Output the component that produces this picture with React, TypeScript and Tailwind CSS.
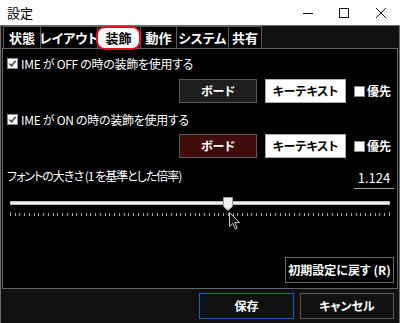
import React from "react";

const TICKS = Array.from({ length: 81 }, (_, i) => i);

function Check({ checked }: { checked?: boolean }) {
  return (
    <span className="flex h-[11px] w-[11px] shrink-0 items-center justify-center border border-[#8a8a8a] bg-white">
      {checked && (
        <svg width="9" height="9" viewBox="0 0 9 9">
          <path d="M1.5 4.6 L3.6 6.8 L7.6 1.8" fill="none" stroke="#444" strokeWidth="1.6" />
        </svg>
      )}
    </span>
  );
}

function ButtonRow({ board }: { board: string }) {
  return (
    <div className="flex h-[24px] items-center pl-[176px]">
      <button
        className={`flex h-[24px] w-[78px] items-center justify-center border border-[#5a5a5a] text-[12px] font-bold text-white ${board}`}
      >
        ボード
      </button>
      <button className="ml-[8px] flex h-[24px] w-[81px] items-center justify-center border border-[#adadad] bg-white text-[12px] font-bold text-black">
        キーテキスト
      </button>
      <span className="ml-[8px] flex items-center gap-[2px]">
        <Check />
        <span className="text-[12px] font-bold text-white">優先</span>
      </span>
    </div>
  );
}

const tabs = [
  { label: "状態", w: "w-[37px]" },
  { label: "レイアウト", w: "w-[57px]" },
  { label: "装飾", w: "w-[43px]", active: true },
  { label: "動作", w: "w-[36px]" },
  { label: "システム", w: "w-[52px]" },
  { label: "共有", w: "w-[34px]" },
];

export default function App() {
  return (
    <div className="flex h-[323px] w-[400px] flex-col bg-white font-[family-name:'Noto_Sans_CJK_JP','Noto_Sans',sans-serif] text-black [font-feature-settings:'palt']">
      {/* title bar */}
      <div className="flex h-[25px] shrink-0 items-center">
        <span className="pl-[7px] text-[13px]">設定</span>
        <div className="ml-auto flex items-center">
          <svg width="12" height="12" viewBox="0 0 12 12" className="mr-[24px]">
            <path d="M1 6.5 H11" stroke="#111" strokeWidth="1" />
          </svg>
          <svg width="12" height="12" viewBox="0 0 12 12" className="mr-[25px]">
            <rect x="1.5" y="1.5" width="9" height="9" fill="none" stroke="#111" strokeWidth="1" />
          </svg>
          <svg width="12" height="12" viewBox="0 0 12 12" className="mr-[13px]">
            <path d="M1 1 L11 11 M11 1 L1 11" stroke="#111" strokeWidth="1" />
          </svg>
        </div>
      </div>

      {/* window body */}
      <div className="flex flex-1 flex-col border-x border-t border-[#6e6e6e] bg-[#111111]">
        {/* tabs */}
        <div className="flex h-[22px] shrink-0 items-end pl-[2px]">
          {tabs.map((t) => (
            <div
              key={t.label}
              className={`relative flex h-[22px] items-center justify-center whitespace-nowrap border-l border-t border-[#5a5a5a] bg-black text-[13px] font-bold text-white last:border-r ${t.w}`}
            >
              {t.active ? (
                <div className="absolute -left-[2px] -right-[1px] -top-[1px] -bottom-[2px] z-10 flex items-center justify-center rounded-[9px] border-2 border-[#e0141e] bg-white text-black">
                  装飾
                </div>
              ) : (
                t.label
              )}
            </div>
          ))}
        </div>

        {/* panel */}
        <div className="mx-[1px] flex h-[241px] shrink-0 flex-col border border-[#646464] bg-black text-white">
          <div className="ml-[4px] mt-[9px] flex h-[11px] items-center gap-[3px]">
            <Check checked />
            <span className="whitespace-nowrap text-[12px] leading-[16px] tracking-[-0.3px]">IME が OFF の時の装飾を使用する</span>
          </div>
          <div className="mt-[10px]">
            <ButtonRow board="bg-[#1e1e1e]" />
          </div>

          <div className="ml-[4px] mt-[11px] flex h-[11px] items-center gap-[3px]">
            <Check checked />
            <span className="whitespace-nowrap text-[12px] leading-[16px] tracking-[-0.3px]">IME が ON の時の装飾を使用する</span>
          </div>
          <div className="mt-[9px]">
            <ButtonRow board="bg-[#3f0b0b]" />
          </div>

          <div className="mt-[10px] flex h-[21px] items-start justify-between pl-[4px] pr-[3px]">
            <span className="whitespace-nowrap text-[12px] leading-[16px] tracking-[-1px]">フォントの大きさ (1 を基準とした倍率)</span>
            <div className="flex h-[21px] w-[40px] items-end justify-center border-b border-[#a0a0a0] pb-[2px] text-[13px] leading-[16px]">
              1.124
            </div>
          </div>

          {/* slider */}
          <div className="relative mx-[7px] mt-[8px] h-[14px]">
            <div className="absolute left-0 right-0 top-[4px] h-[4px] border border-[#bdbdbd] bg-[#f0f0f0]" />
            <svg width="10" height="14" viewBox="0 0 10 14" className="absolute left-[213px] top-0">
              <path d="M0.5 0.5 H9.5 V9.5 L5 13.5 L0.5 9.5 Z" fill="#f0f0f0" stroke="#9a9a9a" />
            </svg>
            {/* mouse pointer */}
            <svg width="12" height="19" viewBox="0 0 12 19" className="absolute left-[219px] top-[15px] z-10">
              <path d="M0.5 0.5 V14.5 L3.8 11.4 L6.2 17 L8.2 16.1 L5.9 10.6 H10.5 Z" fill="#111" stroke="#c8c8c8" strokeWidth="1" />
            </svg>
          </div>
          <div className="mx-[7px] mt-[1px] flex h-[4px] items-end justify-between">
            {TICKS.map((i) => (
              <span
                key={i}
                className={`w-[1px] bg-[#a8a8a8] ${i === 0 || i === 80 ? "h-[4px]" : "h-[3px]"}`}
              />
            ))}
          </div>

          <div className="mt-auto mb-[5px] flex justify-end pr-[3px]">
            <button className="flex h-[26px] w-[109px] items-center justify-center border border-[#6a6a6a] bg-black text-[12px] font-bold text-white">
              初期設定に戻す (R)
            </button>
          </div>
        </div>

        {/* bottom bar */}
        <div className="flex flex-1 items-center justify-end gap-[6px] pr-[5px]">
          <button className="flex h-[26px] w-[95px] items-center justify-center border border-[#0a64c8] text-[12px] font-bold text-white">
            保存
          </button>
          <button className="flex h-[26px] w-[94px] items-center justify-center border border-[#5a5a5a] text-[12px] font-bold text-white">
            キャンセル
          </button>
        </div>
      </div>
    </div>
  );
}
